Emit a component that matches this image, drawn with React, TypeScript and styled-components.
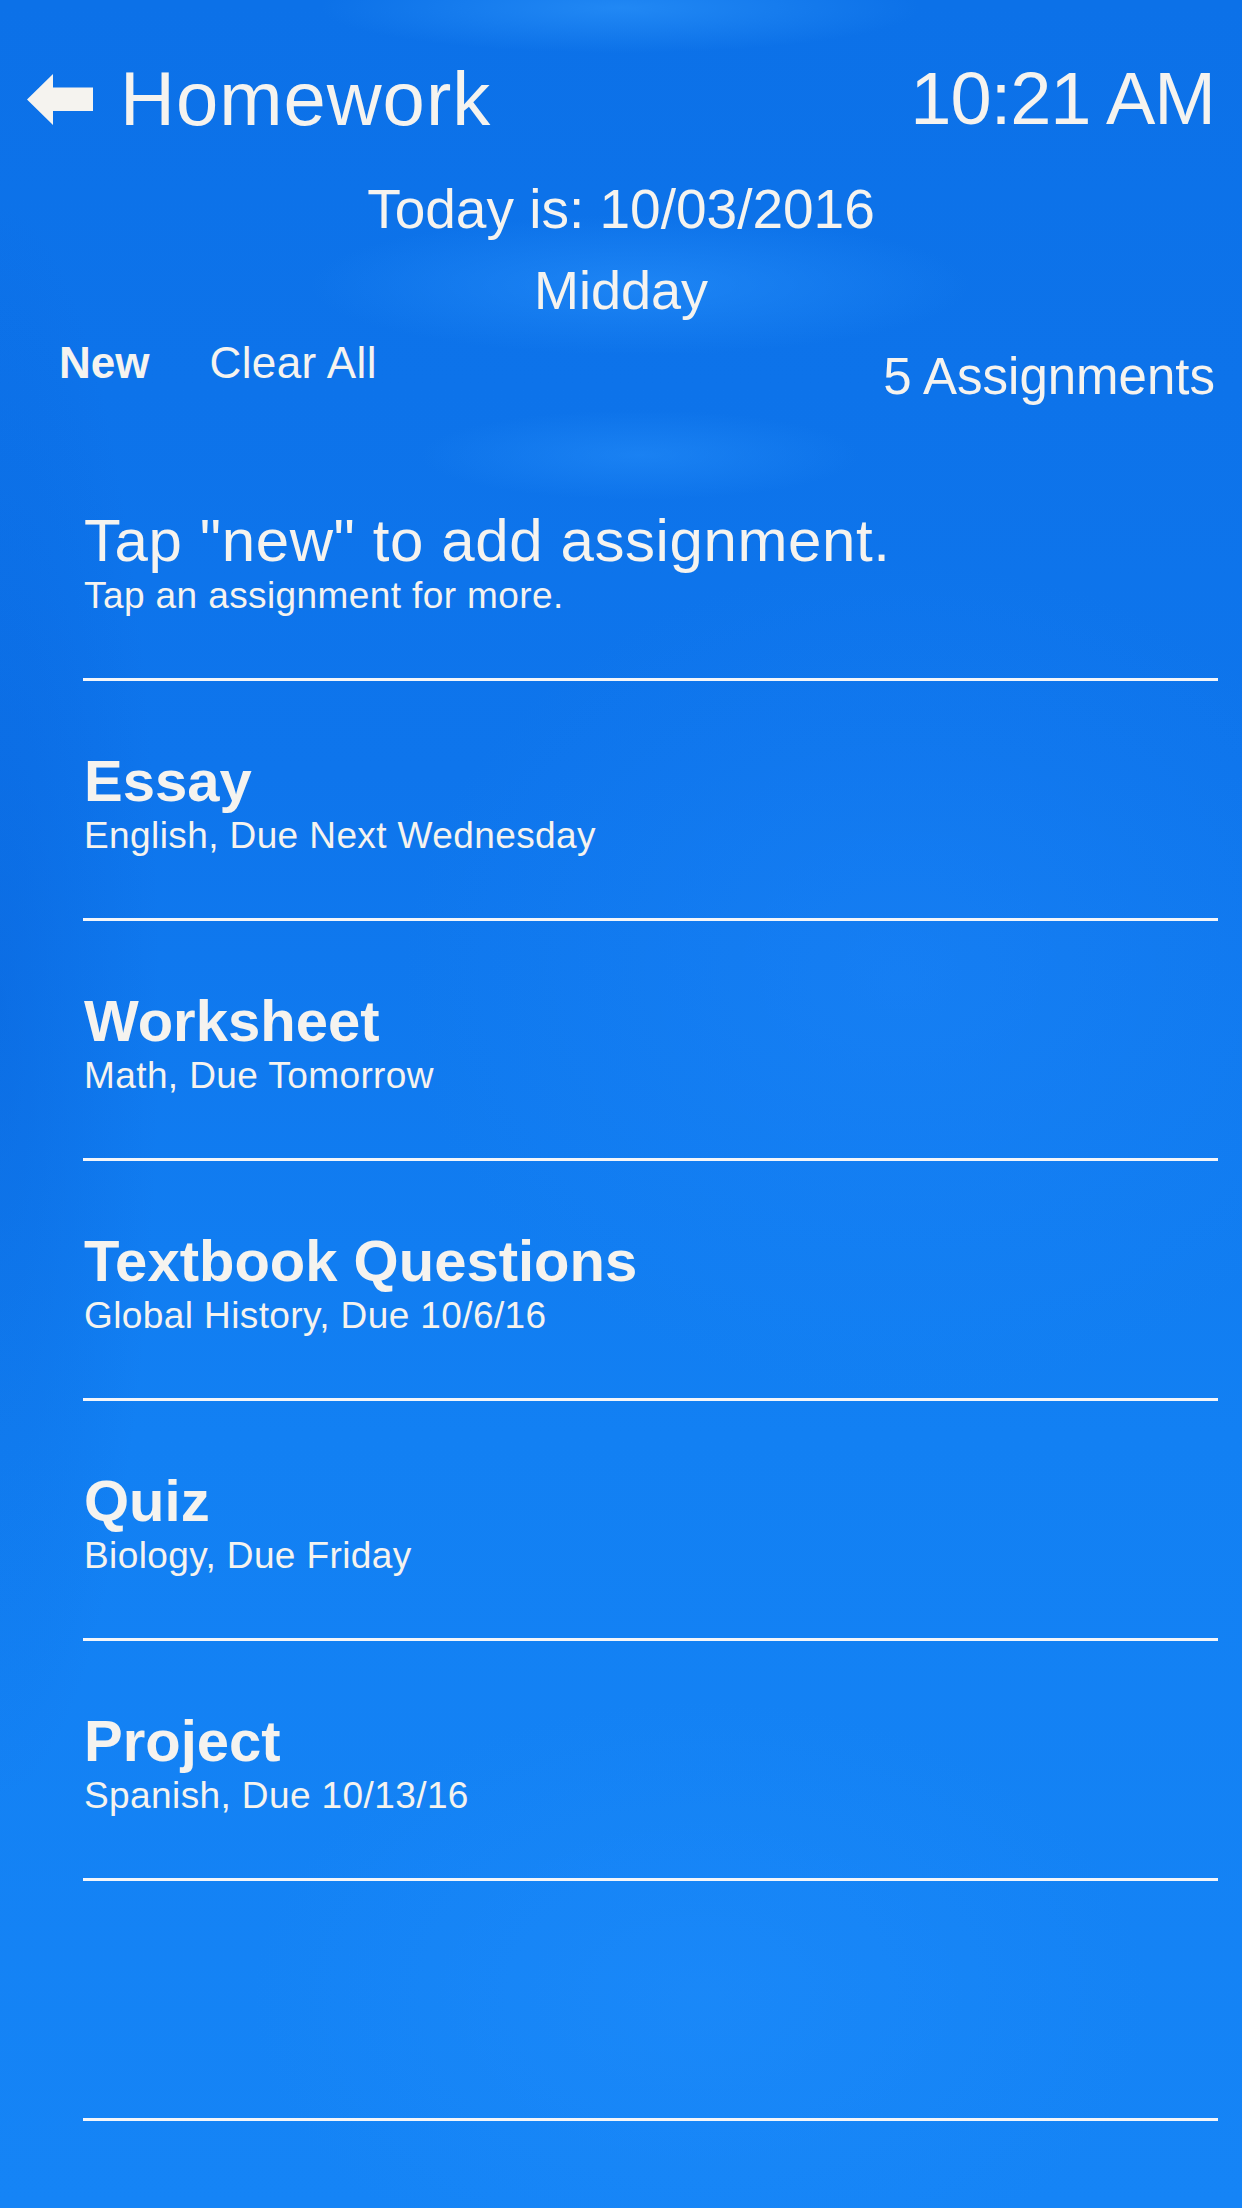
import React from 'react';
import styled, {createGlobalStyle} from 'styled-components';

type Assignment = {
  title: string,
  detail: string,
}

const assignments: Assignment[] = [
  {title: 'Essay', detail: 'English, Due Next Wednesday'},
  {title: 'Worksheet', detail: 'Math, Due Tomorrow'},
  {title: 'Textbook Questions', detail: 'Global History, Due 10/6/16'},
  {title: 'Quiz', detail: 'Biology, Due Friday'},
  {title: 'Project', detail: 'Spanish, Due 10/13/16'},
];

const GlobalStyle = createGlobalStyle`
  html, body {
    margin: 0;
    padding: 0;
  }
  body {
    background: #0f76ec;
    font-family: "Liberation Sans", Arial, sans-serif;
  }
`;

const Screen = styled.div`
  width: 1242px;
  min-height: 2208px;
  overflow: hidden;
  color: #f5f3ef;
  background:
    radial-gradient(ellipse 300px 45px at 620px 8px, rgba(50, 155, 255, 0.55), transparent),
    radial-gradient(ellipse 330px 70px at 640px 285px, rgba(45, 150, 255, 0.5), transparent),
    radial-gradient(ellipse 220px 45px at 640px 455px, rgba(45, 150, 255, 0.4), transparent),
    radial-gradient(ellipse 500px 420px at 900px 980px, rgba(35, 140, 255, 0.3), transparent),
    radial-gradient(ellipse 160px 800px at 0px 1000px, rgba(5, 90, 210, 0.35), transparent),
    radial-gradient(ellipse 450px 300px at 700px 2000px, rgba(35, 145, 255, 0.35), transparent),
    linear-gradient(180deg, #0c71e8 0%, #0e75ec 35%, #1280f3 65%, #1584f6 100%);
`;

const Header = styled.header`
  box-sizing: border-box;
  height: 441px;
  padding: 54px 27px 0 27px;
`;

const TopBar = styled.div`
  display: flex;
  align-items: center;
  justify-content: space-between;
  height: 90px;
`;

const BackLink = styled.div`
  display: flex;
  align-items: center;
  gap: 27px;
`;

const BackArrow = styled.svg`
  display: block;
  width: 66px;
  height: 51px;
  fill: #f5f3ef;
`;

const Title = styled.h1`
  margin: 0;
  font-size: 76px;
  line-height: 90px;
  font-weight: 400;
  letter-spacing: 1px;
`;

const Clock = styled.div`
  font-size: 74px;
  line-height: 90px;
  letter-spacing: -1px;
`;

const CenterLine = styled.div<{ $size: number, $gap: number }>`
  margin-top: ${p => p.$gap}px;
  text-align: center;
  font-size: ${p => p.$size}px;
  line-height: 66px;
`;

const Actions = styled.div`
  display: flex;
  align-items: flex-start;
  padding: 10px 0 0 32px;
`;

const ActionButton = styled.button<{ $bold?: boolean }>`
  margin: 0 60px 0 0;
  padding: 0;
  border: none;
  background: none;
  color: inherit;
  font-family: inherit;
  font-size: 44px;
  line-height: 60px;
  font-weight: ${p => p.$bold ? 700 : 400};
  letter-spacing: ${p => p.$bold ? '0' : '0.4px'};
`;

const Count = styled.div`
  margin: 14px 0 0 auto;
  font-size: 51px;
  line-height: 60px;
`;

const List = styled.ul`
  list-style: none;
  margin: 0 24px 0 83px;
  padding: 0;
`;

const Row = styled.li`
  box-sizing: border-box;
  height: 240px;
  padding: 67px 0 0 1px;
  border-bottom: 3px solid #f4f6fa;
`;

const RowTitle = styled.div<{ $bold?: boolean }>`
  font-size: ${p => p.$bold ? 58 : 60}px;
  line-height: 66px;
  font-weight: ${p => p.$bold ? 700 : 400};
  letter-spacing: ${p => p.$bold ? '0' : '0.6px'};
`;

const RowDetail = styled.div`
  font-size: 37px;
  line-height: 44px;
  letter-spacing: 0.4px;
`;

export default function App() {
  return (
    <Screen>
      <GlobalStyle/>
      <Header>
        <TopBar>
          <BackLink>
            <BackArrow viewBox="0 0 66 51">
              <polygon points="0,25.5 26,0 26,13.5 66,13.5 66,37 26,37 26,51"/>
            </BackArrow>
            <Title>Homework</Title>
          </BackLink>
          <Clock>10:21 AM</Clock>
        </TopBar>
        <CenterLine $size={55} $gap={32}>Today is: 10/03/2016</CenterLine>
        <CenterLine $size={54} $gap={15}>Midday</CenterLine>
        <Actions>
          <ActionButton $bold>New</ActionButton>
          <ActionButton>Clear All</ActionButton>
          <Count>{assignments.length} Assignments</Count>
        </Actions>
      </Header>
      <List>
        <Row>
          <RowTitle>Tap "new" to add assignment.</RowTitle>
          <RowDetail>Tap an assignment for more.</RowDetail>
        </Row>
        {assignments.map(a => (
          <Row key={a.title}>
            <RowTitle $bold>{a.title}</RowTitle>
            <RowDetail>{a.detail}</RowDetail>
          </Row>
        ))}
        <Row/>
      </List>
    </Screen>
  );
}
